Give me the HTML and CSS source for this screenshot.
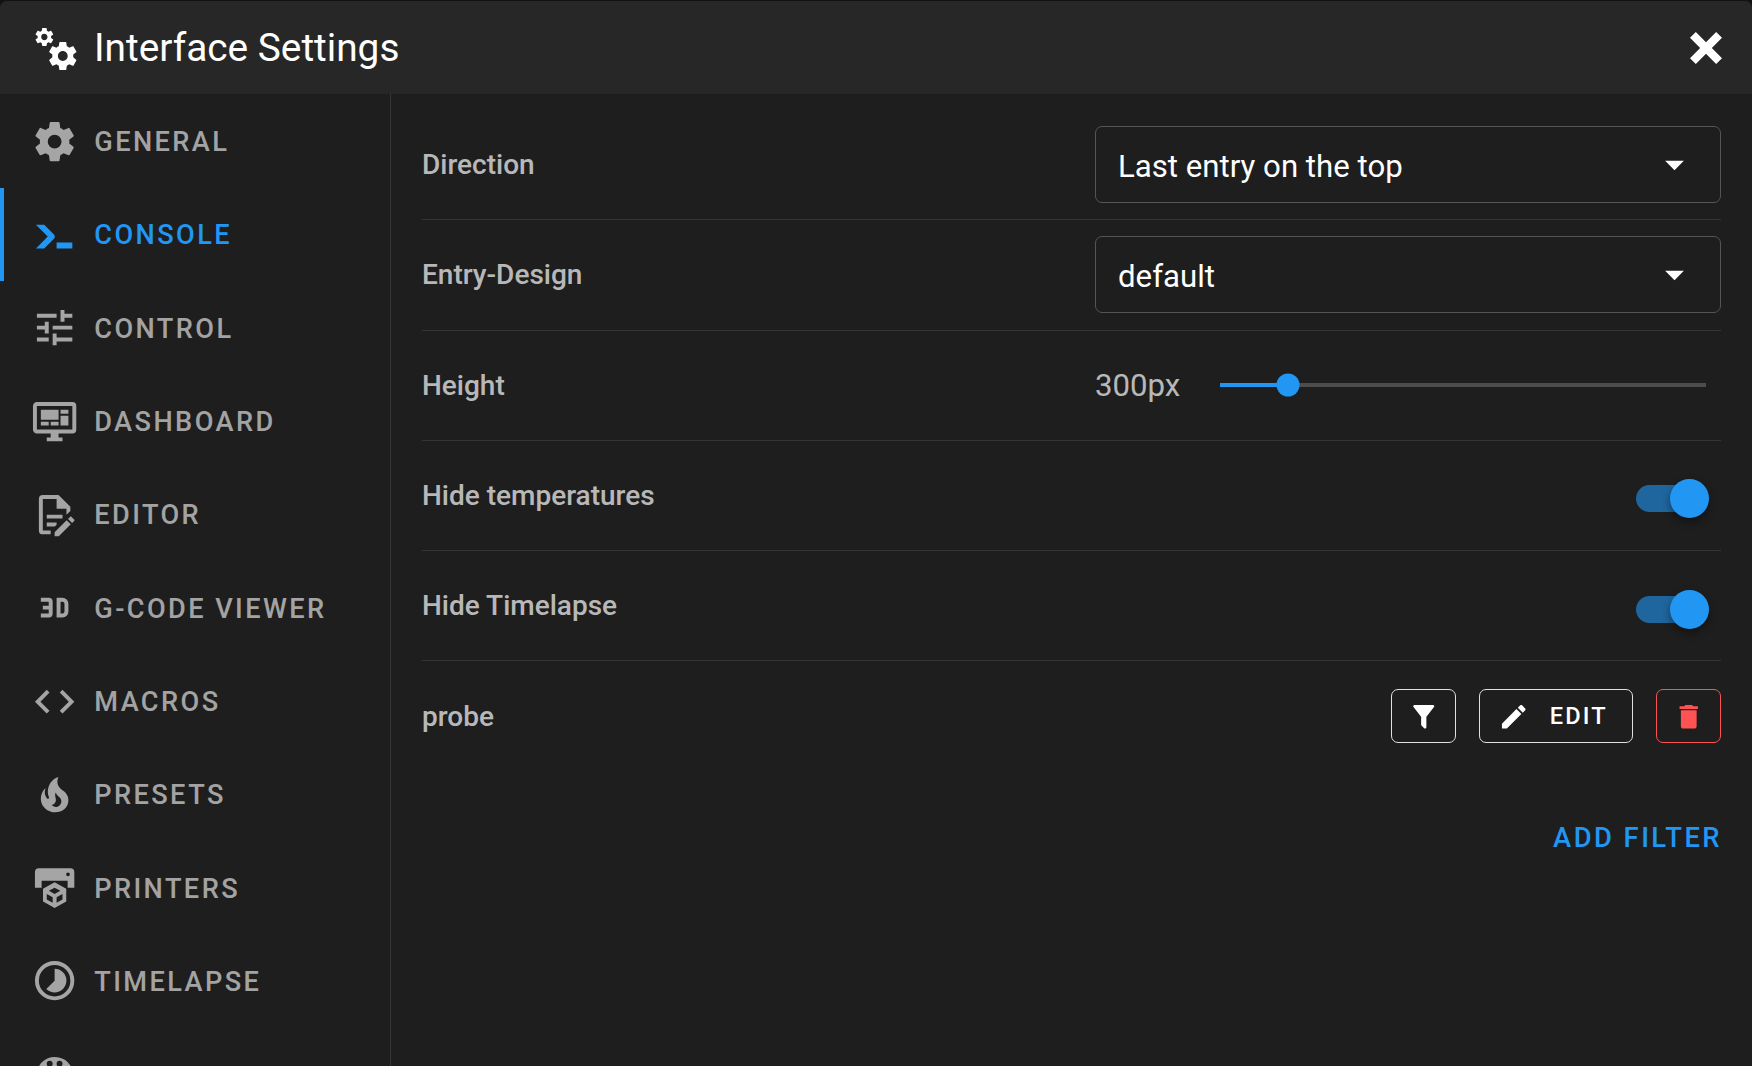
FILE: index.html
```html
<!DOCTYPE html>
<html lang="en">
<head>
  <meta charset="UTF-8" />
  <title>Interface Settings</title>
  <link rel="stylesheet" href="styles.css">
</head>
<body>
  <div class="dialog">
    <header class="dialog-header">
      <svg class="icon title-icon" viewBox="0 0 24 24"><path d="M15.9,18.45C17.25,18.45 18.35,17.35 18.35,16C18.35,14.65 17.25,13.55 15.9,13.55C14.54,13.55 13.45,14.65 13.45,16C13.45,17.35 14.54,18.45 15.9,18.45M21.1,16.68L22.58,17.84C22.71,17.95 22.75,18.13 22.66,18.29L21.26,20.71C21.17,20.86 21,20.92 20.83,20.86L19.09,20.16C18.73,20.44 18.33,20.67 17.91,20.85L17.64,22.7C17.62,22.87 17.47,23 17.3,23H14.5C14.32,23 14.18,22.87 14.15,22.7L13.89,20.85C13.46,20.67 13.07,20.44 12.71,20.16L10.96,20.86C10.81,20.92 10.62,20.86 10.54,20.71L9.14,18.29C9.05,18.13 9.09,17.95 9.22,17.84L10.7,16.68L10.65,16L10.7,15.31L9.22,14.16C9.09,14.05 9.05,13.86 9.14,13.71L10.54,11.29C10.62,11.13 10.81,11.07 10.96,11.13L12.71,11.84C13.07,11.56 13.46,11.32 13.89,11.15L14.15,9.29C14.18,9.13 14.32,9 14.5,9H17.3C17.47,9 17.62,9.13 17.64,9.29L17.91,11.15C18.33,11.32 18.73,11.56 19.09,11.84L20.83,11.13C21,11.07 21.17,11.13 21.26,11.29L22.66,13.71C22.75,13.86 22.71,14.05 22.58,14.16L21.1,15.31L21.15,16L21.1,16.68M6.69,8.07C7.56,8.07 8.26,7.37 8.26,6.5C8.26,5.63 7.56,4.92 6.69,4.92A1.58,1.58 0 0,0 5.11,6.5C5.11,7.37 5.82,8.07 6.69,8.07M10.03,6.94L11,7.68C11.07,7.75 11.09,7.87 11.03,7.97L10.13,9.53C10.08,9.63 9.96,9.67 9.86,9.63L8.74,9.18L8,9.62L7.81,10.81C7.79,10.92 7.7,11 7.59,11H5.79C5.67,11 5.58,10.92 5.56,10.81L5.4,9.62L4.64,9.18L3.5,9.63C3.41,9.67 3.3,9.63 3.24,9.53L2.34,7.97C2.28,7.87 2.31,7.75 2.39,7.68L3.34,6.94L3.31,6.5L3.34,6.06L2.39,5.32C2.31,5.25 2.28,5.13 2.34,5.03L3.24,3.47C3.3,3.37 3.41,3.33 3.5,3.37L4.63,3.82L5.4,3.38L5.56,2.19C5.58,2.08 5.67,2 5.79,2H7.59C7.7,2 7.79,2.08 7.81,2.19L8,3.38L8.74,3.82L9.86,3.37C9.96,3.33 10.08,3.37 10.13,3.47L11.03,5.03C11.09,5.13 11.07,5.25 11,5.32L10.03,6.06L10.06,6.5L10.03,6.94Z"/></svg>
      <h1 class="dialog-title">Interface Settings</h1>
      <svg class="icon close-icon" viewBox="0 0 24 24"><path d="M20 6.91L17.09 4L12 9.09L6.91 4L4 6.91L9.09 12L4 17.09L6.91 20L12 14.91L17.09 20L20 17.09L14.91 12L20 6.91Z"/></svg>
    </header>

    <div class="dialog-body">
      <nav class="tabs">
        <a class="tab">
          <svg class="icon" viewBox="0 0 24 24"><path d="M12,15.5A3.5,3.5 0 0,1 8.5,12A3.5,3.5 0 0,1 12,8.5A3.5,3.5 0 0,1 15.5,12A3.5,3.5 0 0,1 12,15.5M19.43,12.97C19.47,12.65 19.5,12.33 19.5,12C19.5,11.67 19.47,11.34 19.43,11L21.54,9.37C21.73,9.22 21.78,8.95 21.66,8.73L19.66,5.27C19.54,5.05 19.27,4.96 19.05,5.05L16.56,6.05C16.04,5.66 15.5,5.32 14.87,5.07L14.5,2.42C14.46,2.18 14.25,2 14,2H10C9.75,2 9.54,2.18 9.5,2.42L9.13,5.07C8.5,5.32 7.96,5.66 7.44,6.05L4.95,5.05C4.73,4.96 4.46,5.05 4.34,5.27L2.34,8.73C2.21,8.95 2.27,9.22 2.46,9.37L4.57,11C4.53,11.34 4.5,11.67 4.5,12C4.5,12.33 4.53,12.65 4.57,12.97L2.46,14.63C2.27,14.78 2.21,15.05 2.34,15.27L4.34,18.73C4.46,18.95 4.73,19.03 4.95,18.95L7.44,17.94C7.96,18.34 8.5,18.68 9.13,18.93L9.5,21.58C9.54,21.82 9.75,22 10,22H14C14.25,22 14.46,21.82 14.5,21.58L14.87,18.93C15.5,18.67 16.04,18.34 16.56,17.94L19.05,18.95C19.27,19.03 19.54,18.95 19.66,18.73L21.66,15.27C21.78,15.05 21.73,14.78 21.54,14.63L19.43,12.97Z"/></svg>
          General
        </a>
        <a class="tab tab-active">
          <svg class="icon" viewBox="0 0 24 24"><path d="M13,19V16H21V19H13M8.5,13L2.47,7H6.71L11.67,11.95C12.25,12.54 12.25,13.5 11.67,14.07L6.74,19H2.5L8.5,13Z"/></svg>
          Console
        </a>
        <a class="tab">
          <svg class="icon" viewBox="0 0 24 24"><path d="M3,17V19H9V17H3M3,5V7H13V5H3M13,21V19H21V17H13V15H11V21H13M7,9V11H3V13H7V15H9V9H7M21,13V11H11V13H21M15,9H17V7H21V5H17V3H15V9Z"/></svg>
          Control
        </a>
        <a class="tab">
          <svg class="icon" viewBox="0 0 24 24"><path d="M21,16V4H3V16H21M21,2A2,2 0 0,1 23,4V16A2,2 0 0,1 21,18H14V20H16V22H8V20H10V18H3C1.89,18 1,17.1 1,16V4C1,2.89 1.89,2 3,2H21M5,6H14V11H5V6M15,6H19V8H15V6M19,9V14H15V9H19M5,12H9V14H5V12M10,12H14V14H10V12Z"/></svg>
          Dashboard
        </a>
        <a class="tab">
          <svg class="icon" viewBox="0 0 24 24"><path d="M8,12H16V14H8V12M10,20H6V4H13V9H18V12.1L20,10.1V8L14,2H6A2,2 0 0,0 4,4V20A2,2 0 0,0 6,22H10V20M8,18H12.1L13,17.1V16H8V18M20.2,13C20.3,13 20.5,13.1 20.6,13.2L21.9,14.5C22.1,14.7 22.1,15.1 21.9,15.3L20.9,16.3L18.8,14.2L19.8,13.2C19.9,13.1 20,13 20.2,13M20.2,16.9L14.1,23H12V20.9L18.1,14.8L20.2,16.9Z"/></svg>
          Editor
        </a>
        <a class="tab">
          <svg class="icon" viewBox="0 0 24 24"><path d="M5,7H9A2,2 0 0,1 11,9V15A2,2 0 0,1 9,17H5V15H9V13H6V11H9V9H5V7M13,7H16A3,3 0 0,1 19,10V14A3,3 0 0,1 16,17H13V7M16,15A1,1 0 0,0 17,14V10A1,1 0 0,0 16,9H15V15H16Z"/></svg>
          G-Code Viewer
        </a>
        <a class="tab">
          <svg class="icon" viewBox="0 0 24 24"><path d="M14.6,16.6L19.2,12L14.6,7.4L16,6L22,12L16,18L14.6,16.6M9.4,16.6L4.8,12L9.4,7.4L8,6L2,12L8,18L9.4,16.6Z"/></svg>
          Macros
        </a>
        <a class="tab">
          <svg class="icon" viewBox="0 0 24 24"><path d="M17.66 11.2C17.43 10.9 17.15 10.64 16.89 10.38C16.22 9.78 15.46 9.35 14.82 8.72C13.33 7.26 13 4.85 13.95 3C13 3.23 12.17 3.75 11.46 4.32C8.87 6.4 7.85 10.07 9.07 13.22C9.11 13.32 9.15 13.42 9.15 13.55C9.15 13.77 9 13.97 8.8 14.05C8.57 14.15 8.33 14.09 8.14 13.93C8.08 13.88 8.04 13.83 8 13.76C6.87 12.33 6.69 10.28 7.45 8.64C5.78 10 4.87 12.3 5 14.47C5.06 14.97 5.12 15.47 5.29 15.97C5.43 16.57 5.7 17.17 6 17.7C7.08 19.43 8.95 20.67 10.96 20.92C13.1 21.19 15.39 20.8 17.03 19.32C18.86 17.66 19.5 15 18.56 12.72L18.43 12.46C18.22 12 17.66 11.2 17.66 11.2M14.5 17.5C14.22 17.74 13.76 18 13.4 18.1C12.28 18.5 11.16 17.94 10.5 17.28C11.69 17 12.4 16.12 12.61 15.23C12.78 14.43 12.46 13.77 12.33 13C12.21 12.26 12.23 11.63 12.5 10.94C12.69 11.32 12.89 11.7 13.13 12C13.9 13 15.11 13.44 15.37 14.8C15.41 14.94 15.43 15.08 15.43 15.23C15.46 16.05 15.1 16.95 14.5 17.5H14.5Z"/></svg>
          Presets
        </a>
        <a class="tab">
          <svg class="icon" viewBox="0 0 24 24"><path fill-rule="evenodd" d="M4,2.2H20A2,2 0 0,1 22,4.2V12H18.6V8.5H5.4V12H2V4.2A2,2 0 0,1 4,2.2ZM18.8,4.3A0.95,0.95 0 1,0 18.8,6.2A0.95,0.95 0 1,0 18.8,4.3ZM12,9.3L17.9,12.6V19L12,22.4L6.1,19V12.6ZM12,12L9.1,13.6L12,15.2L14.9,13.6ZM8,15.2V18L11,19.7V16.9ZM16,15.2L13,16.9V19.7L16,18Z"/></svg>
          Printers
        </a>
        <a class="tab">
          <svg class="icon" viewBox="0 0 24 24"><path d="M16.24,7.76C15.07,6.59 13.54,6 12,6V12L7.76,16.24C10.1,18.58 13.9,18.58 16.25,16.24C18.59,13.9 18.59,10.1 16.24,7.76M12,2A10,10 0 0,0 2,12A10,10 0 0,0 12,22A10,10 0 0,0 22,12A10,10 0 0,0 12,2M12,20A8,8 0 0,1 4,12A8,8 0 0,1 12,4A8,8 0 0,1 20,12A8,8 0 0,1 12,20Z"/></svg>
          Timelapse
        </a>
        <a class="tab">
          <svg class="icon" viewBox="0 0 24 24"><path d="M17.5,12A1.5,1.5 0 0,1 16,10.5A1.5,1.5 0 0,1 17.5,9A1.5,1.5 0 0,1 19,10.5A1.5,1.5 0 0,1 17.5,12M14.5,8A1.5,1.5 0 0,1 13,6.5A1.5,1.5 0 0,1 14.5,5A1.5,1.5 0 0,1 16,6.5A1.5,1.5 0 0,1 14.5,8M9.5,8A1.5,1.5 0 0,1 8,6.5A1.5,1.5 0 0,1 9.5,5A1.5,1.5 0 0,1 11,6.5A1.5,1.5 0 0,1 9.5,8M6.5,12A1.5,1.5 0 0,1 5,10.5A1.5,1.5 0 0,1 6.5,9A1.5,1.5 0 0,1 8,10.5A1.5,1.5 0 0,1 6.5,12M12,3A9,9 0 0,0 3,12A9,9 0 0,0 12,21A1.5,1.5 0 0,0 13.5,19.5C13.5,19.11 13.35,18.76 13.11,18.5C12.88,18.23 12.73,17.88 12.73,17.5A1.5,1.5 0 0,1 14.23,16H16A5,5 0 0,0 21,11C21,6.58 16.97,3 12,3Z"/></svg>
        </a>
      </nav>

      <main class="panel">
        <div class="row">
          <span class="row-label">Direction</span>
          <div class="select">
            <span class="select-text">Last entry on the top</span>
            <svg class="icon select-arrow" viewBox="0 0 24 24"><path d="M7,10L12,15L17,10H7Z"/></svg>
          </div>
        </div>
        <div class="row">
          <span class="row-label">Entry-Design</span>
          <div class="select">
            <span class="select-text">default</span>
            <svg class="icon select-arrow" viewBox="0 0 24 24"><path d="M7,10L12,15L17,10H7Z"/></svg>
          </div>
        </div>
        <div class="row">
          <span class="row-label">Height</span>
          <div class="slider-wrap">
            <span class="slider-value">300px</span>
            <div class="slider">
              <div class="slider-fill" style="width: 14%"></div>
              <div class="slider-thumb" style="left: 14%"></div>
            </div>
          </div>
        </div>
        <div class="row">
          <span class="row-label">Hide temperatures</span>
          <div class="switch"><div class="switch-knob"></div></div>
        </div>
        <div class="row">
          <span class="row-label">Hide Timelapse</span>
          <div class="switch"><div class="switch-knob"></div></div>
        </div>
        <div class="row row-last">
          <span class="row-label">probe</span>
          <div class="actions">
            <button class="btn btn-icon"><svg class="icon btn-svg" viewBox="0 0 24 24"><path d="M14,12V19.88C14.04,20.18 13.94,20.5 13.71,20.71C13.32,21.1 12.69,21.1 12.3,20.71L10.29,18.7C10.06,18.47 9.96,18.16 10,17.87V12H9.97L4.21,4.62C3.87,4.19 3.95,3.56 4.38,3.22C4.57,3.08 4.78,3 5,3V3H19V3C19.22,3 19.43,3.08 19.62,3.22C20.05,3.56 20.13,4.19 19.79,4.62L14.03,12H14Z"/></svg></button>
            <button class="btn btn-edit"><svg class="icon btn-svg" viewBox="0 0 24 24"><path d="M20.71,7.04C21.1,6.65 21.1,6 20.71,5.63L18.37,3.29C18,2.9 17.35,2.9 16.96,3.29L15.12,5.12L18.87,8.87M3,17.25V21H6.75L17.81,9.93L14.06,6.18L3,17.25Z"/></svg>Edit</button>
            <button class="btn btn-icon btn-danger"><svg class="icon btn-svg" viewBox="0 0 24 24"><path d="M19,4H15.5L14.5,3H9.5L8.5,4H5V6H19M6,19A2,2 0 0,0 8,21H16A2,2 0 0,0 18,19V7H6V19Z"/></svg></button>
          </div>
        </div>
        <div class="panel-footer">
          <button class="btn-text">Add Filter</button>
        </div>
      </main>
    </div>
  </div>
</body>
</html>
```

FILE: styles.css
```css
* {
  box-sizing: border-box;
}

html, body {
  height: 100%;
  margin: 0;
  overflow: hidden;
  background: #121212;
}

body {
  font-family: Roboto, sans-serif;
}

.icon {
  fill: currentColor;
  flex: none;
  display: block;
}

.dialog {
  height: 100%;
  display: flex;
  flex-direction: column;
  background: #1e1e1e;
  border-radius: 7px 7px 0 0;
  overflow: hidden;
  margin-top: 1px;
}

.dialog-header {
  height: 93px;
  flex: none;
  display: flex;
  align-items: center;
  padding: 0 22px 0 31px;
  background: #272727;
  color: #fff;
}

.title-icon {
  width: 48px;
  height: 48px;
  margin-right: 15px;
}

.dialog-title {
  flex: 1;
  margin: 0;
  font-size: 38.8px;
  font-weight: 400;
}

.close-icon {
  width: 48px;
  height: 48px;
}

.dialog-body {
  flex: 1;
  display: flex;
  min-height: 0;
}

/* sidebar */
.tabs {
  width: 391px;
  flex: none;
  padding-top: 0.5px;
  border-right: 1px solid #353535;
}

.tab {
  height: 93.33px;
  display: flex;
  align-items: center;
  padding: 2px 0 0 31px;
  color: rgba(255, 255, 255, 0.6);
  font-size: 27.15px;
  font-weight: 500;
  letter-spacing: 0.0893em;
  text-transform: uppercase;
  white-space: nowrap;
}

.tab .icon {
  width: 47.25px;
  height: 47.25px;
  margin: 0 16px 2px 0;
}

.tab-active {
  color: #2196f3;
  box-shadow: inset 4px 0 0 #2196f3;
}

/* settings rows */
.panel {
  flex: 1;
  min-width: 0;
  padding: 16px 31px 0 31px;
}

.row {
  height: 110.25px;
  display: flex;
  align-items: center;
  justify-content: space-between;
  border-bottom: 1.5px solid #353535;
}

.row-last {
  border-bottom: none;
}

.row-label {
  font-size: 28px;
  font-weight: 500;
  color: rgba(255, 255, 255, 0.7);
}

.select {
  width: 626px;
  height: 77px;
  display: flex;
  align-items: center;
  justify-content: space-between;
  padding: 0 23px 0 22px;
  border: 1.75px solid #555;
  border-radius: 7px;
  color: #fff;
  font-size: 31.2px;
}

.select-text {
  padding-top: 4px;
}

.select-arrow {
  width: 45px;
  height: 45px;
}

.slider-wrap {
  width: 626px;
  display: flex;
  align-items: center;
}

.slider-value {
  width: 125px;
  font-size: 31.2px;
  color: rgba(255, 255, 255, 0.7);
}

.slider {
  position: relative;
  width: 486px;
  height: 3.5px;
  background: #4d4d4d;
}

.slider-fill {
  height: 100%;
  background: #2196f3;
}

.slider-thumb {
  position: absolute;
  top: 50%;
  width: 23px;
  height: 23px;
  border-radius: 50%;
  background: #2196f3;
  transform: translate(-50%, -50%);
}

.switch {
  position: relative;
  width: 63px;
  height: 27px;
  margin: 7px 22px 0 0;
  border-radius: 14px;
  background: #1f669e;
}

.switch-knob {
  position: absolute;
  top: -6px;
  right: -10px;
  width: 39px;
  height: 39px;
  border-radius: 50%;
  background: #2196f3;
  box-shadow: 0 4px 8px rgba(0, 0, 0, 0.4);
}

.actions {
  display: flex;
  gap: 23px;
}

.btn {
  height: 54px;
  display: flex;
  align-items: center;
  justify-content: center;
  padding: 0;
  background: transparent;
  border: 1.75px solid #e0e0e0;
  border-radius: 7px;
  color: #fff;
  font-family: inherit;
  font-size: 23.6px;
  font-weight: 500;
  letter-spacing: 0.0893em;
  text-transform: uppercase;
}

.btn-icon {
  width: 65px;
}

.btn-edit {
  width: 154px;
  gap: 20px;
  padding-right: 6px;
}

.btn-svg {
  width: 31.5px;
  height: 31.5px;
}

.btn-danger {
  color: #ff5252;
  border-color: #ff5252;
}

.panel-footer {
  display: flex;
  justify-content: flex-end;
  padding-top: 50px;
}

.btn-text {
  margin-right: -1px;
  padding: 0;
  border: none;
  background: transparent;
  color: #2196f3;
  font-family: inherit;
  font-size: 27.4px;
  font-weight: 500;
  letter-spacing: 0.0893em;
  text-transform: uppercase;
}
```
